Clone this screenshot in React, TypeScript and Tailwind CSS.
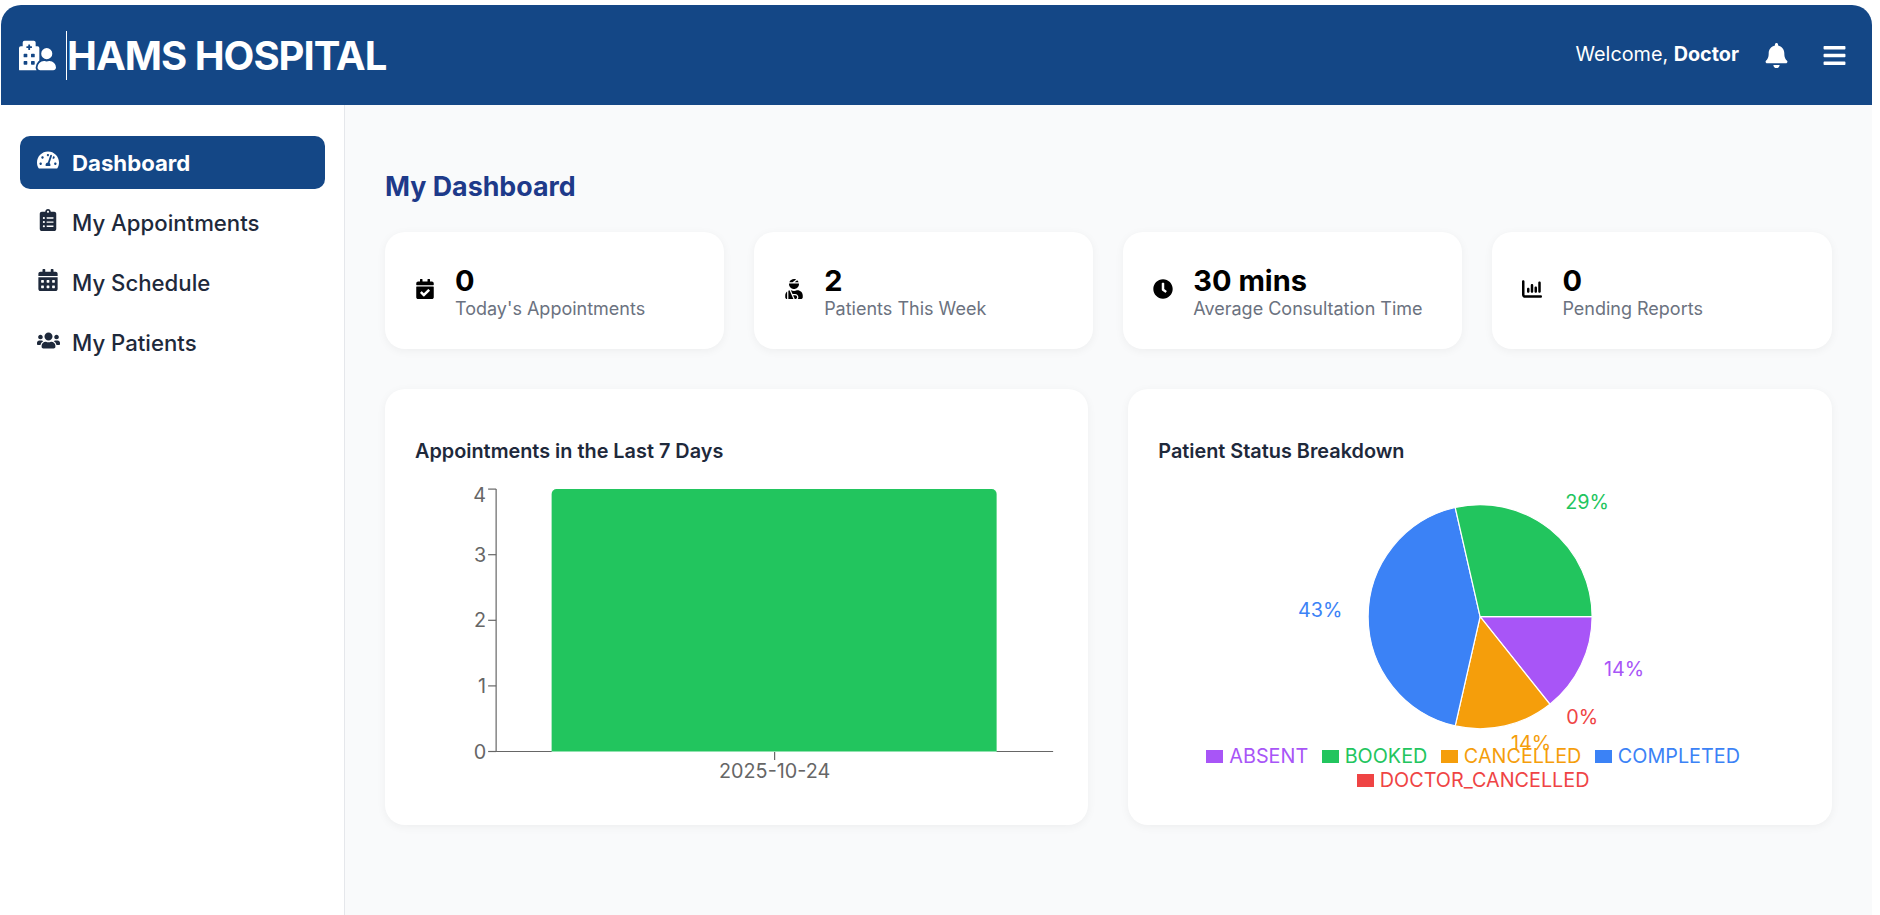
import { FaBars, FaBell, FaCalendarAlt, FaCalendarCheck, FaClipboardList, FaClock, FaHospitalUser, FaTachometerAlt, FaUserInjured, FaUsers } from "react-icons/fa";
import { FaChartColumn } from "react-icons/fa6";

const navItems = [
  { label: "Dashboard", icon: <FaTachometerAlt className="text-[22px]" />, active: true },
  { label: "My Appointments", icon: <FaClipboardList className="text-[22px]" /> },
  { label: "My Schedule", icon: <FaCalendarAlt className="text-[22px]" /> },
  { label: "My Patients", icon: <FaUsers className="text-[23px]" /> },
];

const stats = [
  { value: "0", label: "Today's Appointments", icon: <FaCalendarCheck /> },
  { value: "2", label: "Patients This Week", icon: <FaUserInjured /> },
  { value: "30 mins", label: "Average Consultation Time", icon: <FaClock /> },
  { value: "0", label: "Pending Reports", icon: <FaChartColumn /> },
];

const legend = [
  { label: "ABSENT", text: "text-[#a855f7]", bg: "bg-[#a855f7]" },
  { label: "BOOKED", text: "text-[#22c55e]", bg: "bg-[#22c55e]" },
  { label: "CANCELLED", text: "text-[#f59e0b]", bg: "bg-[#f59e0b]" },
  { label: "COMPLETED", text: "text-[#3b82f6]", bg: "bg-[#3b82f6]" },
  { label: "DOCTOR_CANCELLED", text: "text-[#ef4444]", bg: "bg-[#ef4444]" },
];

const slices = [
  { color: "#a855f7", share: 1 / 7 },
  { color: "#f59e0b", share: 1 / 7 },
  { color: "#3b82f6", share: 3 / 7 },
  { color: "#22c55e", share: 2 / 7 },
];

const pieLabels = [
  { text: "29%", x: 429, y: 25, color: "#22c55e" },
  { text: "43%", x: 162, y: 133, color: "#3b82f6" },
  { text: "14%", x: 466, y: 192, color: "#a855f7" },
  { text: "0%", x: 424, y: 240, color: "#ef4444" },
  { text: "14%", x: 373, y: 266, color: "#f59e0b" },
];

function slicePath(start: number, share: number) {
  const cx = 322;
  const cy = 139.7;
  const r = 112;
  const a0 = start * 2 * Math.PI;
  const a1 = (start + share) * 2 * Math.PI;
  const large = share > 0.5 ? 1 : 0;
  return `M${cx} ${cy}L${cx + r * Math.cos(a0)} ${cy + r * Math.sin(a0)}A${r} ${r} 0 ${large} 1 ${cx + r * Math.cos(a1)} ${cy + r * Math.sin(a1)}Z`;
}

const BarChart = () => (
  <svg className="block w-full h-[306px]" viewBox="0 0 643 306" fontFamily="Inter, sans-serif" fontSize="19.8">
    <line x1="81" y1="12" x2="81" y2="275" stroke="#666" strokeWidth="1.2" />
    <line x1="81" y1="274.5" x2="638" y2="274.5" stroke="#666" strokeWidth="1.2" />
    {[0, 1, 2, 3, 4].map((n) => {
      const y = 274.5 - n * 65.6;
      return (
        <g key={n}>
          <line x1="73" y1={y} x2="81" y2={y} stroke="#666" strokeWidth="1.2" />
          <text x="71" y={n === 4 ? y + 13 : y + 7} textAnchor="end" fill="#666">{n}</text>
        </g>
      );
    })}
    <path d="M136.5 275V17a5 5 0 0 1 5-5h435a5 5 0 0 1 5 5V275Z" fill="#22c55e" />
    <line x1="136.5" y1="274.5" x2="581.5" y2="274.5" stroke="#fff" strokeOpacity="0.5" strokeWidth="1.2" />
    <line x1="359.5" y1="275" x2="359.5" y2="283" stroke="#666" strokeWidth="1.2" />
    <text x="359.5" y="301" textAnchor="middle" fill="#666">2025-10-24</text>
  </svg>
);

const PieChart = () => {
  let start = 0;
  return (
    <svg className="block w-full h-[306px] overflow-visible" viewBox="0 0 643 306" fontFamily="Inter, sans-serif" fontSize="19.8">
      {slices.map((s) => {
        const d = slicePath(start, s.share);
        start += s.share;
        return <path key={s.color} d={d} fill={s.color} stroke="#fff" strokeWidth="1.2" />;
      })}
      {pieLabels.map((l) => (
        <text key={l.text + l.color} x={l.x} y={l.y + 7} textAnchor="middle" fill={l.color}>{l.text}</text>
      ))}
    </svg>
  );
};

const App = () => {
  return (
    <div className="h-screen w-full overflow-hidden bg-white pt-[5px] pl-px pr-2 flex flex-col font-['Inter',sans-serif]">
      <header className="h-[100px] shrink-0 rounded-t-[20px] bg-[#144786] flex items-center justify-between pl-[18px] pr-[25px] text-white">
        <div className="flex items-center">
          <FaHospitalUser className="text-[37px]" />
          <span className="ml-[10px] border-l border-white pt-px h-[49px] flex items-center text-[40px] font-bold tracking-[-1px]">HAMS HOSPITAL</span>
        </div>
        <div className="flex items-center">
          <span className="text-[19.8px]">Welcome, <b>Doctor</b></span>
          <FaBell className="ml-[25px] text-[25px]" />
          <FaBars className="ml-[33px] text-[25px]" />
        </div>
      </header>
      <div className="flex-1 flex min-h-0">
        <aside className="w-[344px] shrink-0 border-r border-[#e5e7eb] px-[19px] pt-[31px] flex flex-col gap-[7px]">
          {navItems.map((item) => (
            <div
              key={item.label}
              className={`h-[53px] rounded-[10px] flex items-center text-[22.2px] ${item.active ? "bg-[#144786] text-white font-bold" : "text-[#1e293b] font-medium"}`}
            >
              <span className="w-[52px] pl-[17px] -mt-[5px] shrink-0">{item.icon}</span>
              <span className="pt-px">{item.label}</span>
            </div>
          ))}
        </aside>
        <main className="flex-1 bg-[#f9fafb] pl-10 pr-[40.5px] pt-[63px]">
          <h1 className="text-[26.8px] leading-[36px] font-bold text-[#1e3a8a]">My Dashboard</h1>
          <div className="mt-[28px] grid grid-cols-4 gap-[30px]">
            {stats.map((s) => (
              <div key={s.label} className="h-[117px] rounded-[20px] bg-white shadow-[0_2px_10px_rgba(0,0,0,0.05)] pl-[30px] flex items-center gap-[20px]">
                <span className="text-[20px] text-black -mt-[3px]">{s.icon}</span>
                <div className="pt-[2px]">
                  <div className="text-[29px] leading-[34px] font-bold text-black">{s.value}</div>
                  <div className="text-[18px] leading-[22px] text-[#6b7280]">{s.label}</div>
                </div>
              </div>
            ))}
          </div>
          <div className="mt-[40px] grid grid-cols-2 gap-[40px]">
            <div className="h-[436px] rounded-[20px] bg-white shadow-[0_2px_10px_rgba(0,0,0,0.05)] px-[30px] pt-[50px]">
              <h2 className="text-[19.85px] leading-[24px] font-semibold text-[#1e293b]">Appointments in the Last 7 Days</h2>
              <div className="mt-[14px]"><BarChart /></div>
            </div>
            <div className="h-[436px] rounded-[20px] bg-white shadow-[0_2px_10px_rgba(0,0,0,0.05)] px-[30px] pt-[50px]">
              <h2 className="text-[19.85px] leading-[24px] font-semibold text-[#1e293b]">Patient Status Breakdown</h2>
              <div className="mt-[14px]"><PieChart /></div>
              <div className="-mt-[39px] flex flex-wrap justify-center leading-[24px] text-[19.8px]">
                {legend.map((l) => (
                  <span key={l.label} className={`mr-[13.5px] flex items-center ${l.text}`}>
                    <span className={`w-[17px] h-[13px] mr-[6px] ${l.bg}`} />
                    {l.label}
                  </span>
                ))}
              </div>
            </div>
          </div>
        </main>
      </div>
    </div>
  );
};

export default App;
